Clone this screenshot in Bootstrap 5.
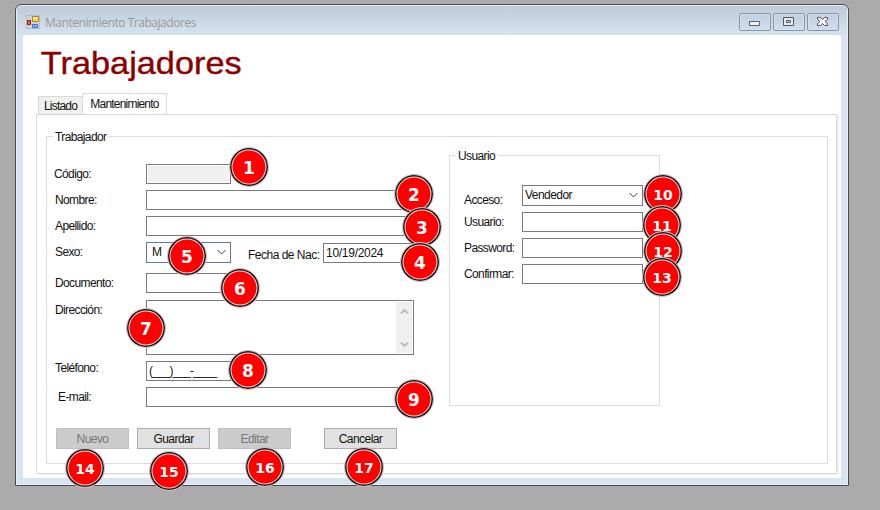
<!DOCTYPE html>
<html lang="es">
<head>
<meta charset="utf-8">
<meta name="viewport" content="width=device-width, initial-scale=1">
<title>Mantenimiento Trabajadores</title>
<link href="https://cdn.jsdelivr.net/npm/bootstrap@5.3.0/dist/css/bootstrap.min.css" rel="stylesheet">
<style>
body{background:#ababab;font:12px/14px "Liberation Sans",Arial,sans-serif;letter-spacing:-.62px;color:#111;width:880px;height:510px;overflow:hidden}
.win{width:834px;height:482px;margin:4px 0 0 15px;border:1px solid #4b4b4b;border-radius:6px 6px 0 0;background:linear-gradient(#bccad9,#d7e4f1 31px);box-shadow:inset 0 0 0 1px #e7eff8;padding:0 7px 7px}
.titlebar{height:30px;padding:3px 2px 0 3px}
.caption-text{font:12px/16px "Open Sans","Noto Sans",sans-serif;letter-spacing:-.46px;color:#999;margin:2px 0 0 5px}
.wbtns{gap:2px}
.wbtn{width:32px;height:18px;border:1px solid #8994ae;border-radius:2px;box-shadow:inset 0 0 0 1px #d5e0ee;background:linear-gradient(#c2cfdf,#d0ddeb)}
.client{height:443px;padding-left:13px}
.heading{font:32px/38px "Liberation Sans",Arial,sans-serif;letter-spacing:.03px;transform:scaleX(1.07);transform-origin:0 0;-webkit-text-stroke:.4px #8b0000;color:#8b0000;padding:9px 0 0 4.500px;height:59px;width:300px}
.tabs{height:20px;padding-left:2px;letter-spacing:-.8px}
.tab-off{width:45px;height:18px;background:#f0f0f0;border:1px solid #d9d9d9;border-bottom:0;padding-top:2px}
.tab-on{width:85px;height:21px;background:#fff;border:1px solid #d9d9d9;border-bottom:0;margin-left:-1px;padding-top:3px;z-index:1}
.pane{width:801px;height:360px;border:1px solid #d9d9d9;box-shadow:2px 1px 0 #f0f0f0;padding:21px 0 0 9px}
.groupbox{border:1px solid #dcdcdc}
.group-title{width:max-content;height:14px;margin-top:-7px;background:#fff}
.g-main{width:782px;height:328px;padding-left:7px}
.g-main>.group-title{margin-left:-1px;padding:0 2px}
.g-user{width:211px;height:251px;margin:11px 0 0 27px;padding-left:14px}
.g-user>.group-title{margin-left:-8px;padding:0 3px 0 2px}
.fields{width:368px;margin-top:20px}
.lbl{width:92px;padding:3px 0 0 1px;white-space:nowrap}
.lbl-u{width:58px;padding-top:3px;white-space:nowrap}
.low{padding-top:8px}
.high{padding-top:0}
.lbl-date{width:75px;padding-top:6px;letter-spacing:-.5px;margin-left:17px;white-space:nowrap}
.box{height:20px;border:1px solid #7a7a7a;background:#fff;padding:2px 0 0 2px;white-space:nowrap}
.date{letter-spacing:-.28px}
.phone{letter-spacing:-.88px}
.off{background:#f0f0f0;box-shadow:inset 0 0 0 1px #fff}
.w85{width:85px}.w268{width:268px}.w91{width:91px}.w121{width:121px}
.combo{height:21px;padding:2px 4px 0 2px;letter-spacing:-.55px}
.sexo{border-color:#5d7a98;padding-left:5px}
.area{height:55px;padding:1px}
.sbar{width:16px;background:#f0f0f0;padding:6px 0 5px}
.first{margin-top:22px}.g5{margin-top:5px}.g6{margin-top:6px}.g7{margin-top:7px}.g10{margin-top:10px}
.actions{margin:21px 0 0 2px;gap:8px}
.wf{width:73px;height:21px;border:1px solid #adadad;background:#e1e1e1;border-radius:0;padding:0;font:inherit;letter-spacing:-.55px;color:#111}
.wf:disabled{background:#ccc;border-color:#bfbfbf;color:#777;opacity:1}
.wf.apart{margin-left:25px}
.dot{position:absolute;left:calc(var(--x)*1px - 20px);top:calc(var(--y)*1px - 20px);width:40px;height:40px;border-radius:50%;background:#f00;border:1px solid #c8c8c8;box-shadow:inset 0 0 0 1.5px #111,inset 0 0 0 2.5px #f4dada;color:#fff;font:bold 17px/40px "DejaVu Sans",sans-serif;letter-spacing:0;text-align:center;z-index:3}
.two{font:bold 14px/40px "DejaVu Sans",sans-serif}
.n1{--x:249;--y:167}.n2{--x:414;--y:194}.n3{--x:422;--y:227}.n4{--x:420;--y:262}.n5{--x:187;--y:256}.n6{--x:240;--y:288}.n7{--x:146;--y:328}.n8{--x:248;--y:370}.n9{--x:414;--y:399}
.n10{--x:663;--y:194}.n11{--x:662;--y:225}.n12{--x:663;--y:251}.n13{--x:662;--y:277}.n14{--x:85;--y:468}.n15{--x:169;--y:471}.n16{--x:265;--y:467}.n17{--x:364;--y:467}
</style>
<script src="https://cdn.jsdelivr.net/npm/bootstrap@5.3.0/dist/js/bootstrap.bundle.min.js"></script>
</head>
<body>
<div class="win">
  <div class="titlebar d-flex align-items-center">
    <svg width="14" height="14" viewBox="0 0 14 14"><path d="M.5.5h13v13H.5z" fill="#ccd2d8" stroke="#b7bdc3"/><path d="M6.500 1.500h6v5h-6z" fill="#ffd447" stroke="#ae8316"/><path d="M7 2h5v2H7z" fill="#fff09d"/><path d="M1.500 5.500h3v4h-3z" fill="#e8695c" stroke="#8e1712"/><path d="M6.500 9.500h5v3h-5z" fill="#7fb0f5" stroke="#3f74d0"/></svg>
    <span class="caption-text">Mantenimiento Trabajadores</span>
    <div class="wbtns d-flex ms-auto">
      <div class="wbtn d-flex align-items-center justify-content-center"><svg width="12" height="10"><path d="M.5 4.500h10v4H.5z" fill="#f5f5f5" stroke="#5a5d6d"/></svg></div>
      <div class="wbtn d-flex align-items-center justify-content-center"><svg width="12" height="10"><path d="M.5.5h10v8H.5z" fill="#e8e8ec" stroke="#53566a"/><path d="M3.500 3.500h4v2h-4z" fill="#c3d0e0" stroke="#53566a"/></svg></div>
      <div class="wbtn d-flex align-items-center justify-content-center"><svg width="12" height="10"><path d="M.5.5h3l2 2 2-2h3v2l-2.500 2 2.500 2v2h-3l-2-2-2 2h-3v-2l2.500-2-2.500-2z" fill="#f3f3f3" stroke="#53566a"/></svg></div>
    </div>
  </div>
  <div class="client bg-white">
    <h1 class="heading m-0">Trabajadores</h1>
    <div class="tabs d-flex align-items-end">
      <div class="tab-off text-center">Listado</div>
      <div class="tab-on text-center">Mantenimiento</div>
    </div>
    <div class="pane">
      <div class="groupbox g-main">
        <div class="group-title">Trabajador</div>
        <div class="d-flex align-items-start">
          <div class="fields">
            <div class="d-flex"><div class="lbl ps-0">Código:</div><div class="box off w85"></div></div>
            <div class="d-flex g6"><div class="lbl">Nombre:</div><div class="box w268"></div></div>
            <div class="d-flex g6"><div class="lbl">Apellido:</div><div class="box w268"></div></div>
            <div class="d-flex g6"><div class="lbl">Sexo:</div>
              <div class="box combo sexo w85 d-flex justify-content-between"><span>M</span><svg width="9" height="14"><path d="M.5 5l4 4 4-4" fill="none" stroke="#444"/></svg></div>
              <div class="lbl-date">Fecha de Nac:</div><div class="box date w91 mt-auto">10/19/2024</div></div>
            <div class="d-flex g10"><div class="lbl">Documento:</div><div class="box w85"></div></div>
            <div class="d-flex g7"><div class="lbl">Dirección:</div><div class="box area w268 d-flex justify-content-end">
              <div class="sbar d-flex flex-column justify-content-between align-items-center"><svg width="9" height="7"><path d="M1 5.500l3.500-3.500 3.500 3.500" fill="none" stroke="#bdbdbd" stroke-width="2"/></svg><svg width="9" height="7"><path d="M1 1.500l3.500 3.500 3.500-3.500" fill="none" stroke="#bdbdbd" stroke-width="2"/></svg></div></div></div>
            <div class="d-flex g6"><div class="lbl high">Teléfono:</div><div class="box phone w85">(___)___-____</div></div>
            <div class="d-flex g6"><div class="lbl ps-1">E-mail:</div><div class="box w268"></div></div>
            <div class="actions d-flex">
              <button class="btn wf" disabled>Nuevo</button><button class="btn wf">Guardar</button><button class="btn wf" disabled>Editar</button><button class="btn wf apart">Cancelar</button>
            </div>
          </div>
          <div class="groupbox g-user">
            <div class="group-title">Usuario</div>
            <div class="d-flex first"><div class="lbl-u low">Acceso:</div><div class="box combo w121 d-flex justify-content-between"><span>Vendedor</span><svg width="9" height="14"><path d="M.5 5l4 4 4-4" fill="none" stroke="#444"/></svg></div></div>
            <div class="d-flex g5"><div class="lbl-u">Usuario:</div><div class="box w121"></div></div>
            <div class="d-flex g6"><div class="lbl-u">Password:</div><div class="box w121"></div></div>
            <div class="d-flex g6"><div class="lbl-u">Confirmar:</div><div class="box w121"></div></div>
          </div>
        </div>
      </div>
    </div>
  </div>
</div>
<div class="dot n1">1</div>
<div class="dot n2">2</div>
<div class="dot n3">3</div>
<div class="dot n4">4</div>
<div class="dot n5">5</div>
<div class="dot n6">6</div>
<div class="dot n7">7</div>
<div class="dot n8">8</div>
<div class="dot n9">9</div>
<div class="dot two n10">10</div>
<div class="dot two n11">11</div>
<div class="dot two n12">12</div>
<div class="dot two n13">13</div>
<div class="dot two n14">14</div>
<div class="dot two n15">15</div>
<div class="dot two n16">16</div>
<div class="dot two n17">17</div>
</body>
</html>
